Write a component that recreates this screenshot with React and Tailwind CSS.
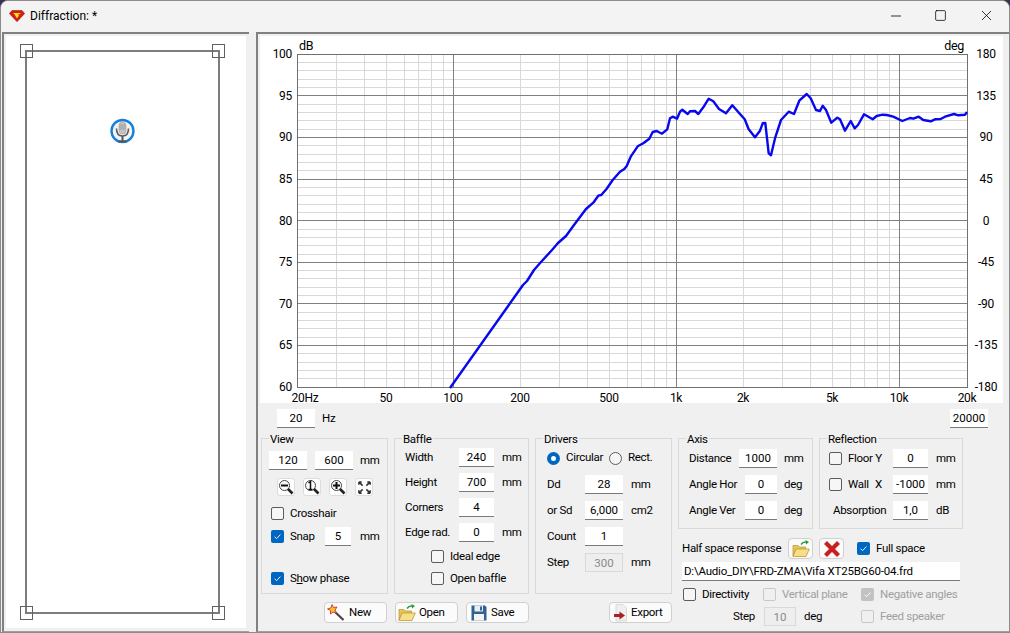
import { Minus, Square, X } from "lucide-react";

const CURVE = "450,388 523,285 527,281 534,270 541,262 552,250 558,243 566,236 574,225 586,209 593.3,202.7 598.3,195.7 601.3,195 606.7,188.7 612.7,180 620,171.7 624.3,169 626.7,166 630.7,156.7 637.7,146.3 643.3,143.3 649.3,138.7 652.7,132 656.7,131 662,133.7 667.3,129.3 670,118.3 672.7,116.7 677,118.7 680,111.7 682.3,109.7 687.7,114 690,111.3 695,111 698.3,114 703.3,107.3 708.7,98.7 713.3,101.3 719,109 726,113.3 732.3,105.3 740,114 744.7,119.3 748.7,129.3 755,137.3 760,130.7 762.7,123.3 765.3,123 768.7,153.3 771,155.3 775.3,137.3 781,120 788.7,111.7 794,114 799.3,100.7 806.7,94 810.7,98.3 816,110 820,111 822.7,105.7 826,110 831.3,122.7 837.3,117.7 840,119.3 845,130.7 850.7,121 854.7,128.3 858,125 864,114.3 872.7,119.3 876.7,116 882.7,114.7 886.7,115 893.3,116.7 902.3,121 910,118 913.3,118.7 918.7,116.7 923.3,120 930.7,121.3 935,119.3 940.7,119 945,116.7 954,114 958.3,115.3 965,114.7 967,112";

const FONT = "Roboto, sans-serif";
const TOP = 54;
const BOTTOM = 387;
const LEFT = 297;
const RIGHT = 967;

const freqX = (f) => Math.round(453 + 223 * Math.log10(f / 100)) + 0.5;
const dbY = (db) => Math.round(TOP - 0.3 + ((100 - db) * (BOTTOM - TOP)) / 40) + 0.5;

const minorFreqs = [];
[10, 100, 1000, 10000].forEach((d) => {
  [2, 3, 4, 5, 6, 7, 8, 9].forEach((m) => {
    if (d * m > 20 && d * m < 20000) minorFreqs.push(d * m);
  });
});
const dbs = Array.from({ length: 41 }, (_, i) => 60 + i);
const leftLabels = [100, 95, 90, 85, 80, 75, 70, 65, 60];
const rightLabels = [180, 135, 90, 45, 0, -45, -90, -135, -180];
const freqLabels = [
  ["20Hz", 305],
  ["50", 386],
  ["100", 453],
  ["200", 520],
  ["500", 609],
  ["1k", 676],
  ["2k", 743],
  ["5k", 832],
  ["10k", 899],
  ["20k", 967],
];

function Chart() {
  return (
    <svg viewBox="260 36 743 367" className="block w-[743px] h-[367px] ml-[2px] bg-white" style={{ fontFamily: FONT }}>
      <g shapeRendering="crispEdges" strokeWidth="1">
        {dbs.filter((d) => d % 5 !== 0).map((d) => (
          <line key={d} x1={LEFT} x2={RIGHT} y1={dbY(d)} y2={dbY(d)} stroke="#d9d9d9" />
        ))}
        {minorFreqs.map((f) => (
          <line key={f} x1={freqX(f)} x2={freqX(f)} y1={TOP} y2={BOTTOM} stroke="#d9d9d9" />
        ))}
        {dbs.filter((d) => d % 5 === 0).map((d) => (
          <line key={d} x1={LEFT} x2={RIGHT} y1={dbY(d)} y2={dbY(d)} stroke="#808080" />
        ))}
        {[100, 1000, 10000].map((f) => (
          <line key={f} x1={freqX(f)} x2={freqX(f)} y1={TOP} y2={BOTTOM} stroke="#808080" />
        ))}
        <rect x={LEFT + 0.5} y={TOP + 0.5} width={RIGHT - LEFT} height={BOTTOM - TOP} fill="none" stroke="#707070" />
      </g>
      <polyline points={CURVE} fill="none" stroke="#0808ee" strokeWidth="2.4" strokeLinejoin="round" />
      <text x="299" y="50" fontSize="12.5">dB</text>
      <text x="964" y="50" fontSize="12.5" textAnchor="end">deg</text>
      {leftLabels.map((v, i) => (
        <text key={v} x="292" y={TOP + (i * (BOTTOM - TOP)) / 8 + 4} fontSize="12" textAnchor="end">{v}</text>
      ))}
      {rightLabels.map((v, i) => (
        <text key={v} x="986" y={TOP + (i * (BOTTOM - TOP)) / 8 + 4} fontSize="12" textAnchor="middle">{v}</text>
      ))}
      {freqLabels.map(([t, x]) => (
        <text key={t} x={x} y="401.5" fontSize="12" textAnchor="middle">{t}</text>
      ))}
    </svg>
  );
}

function Handle({ x, y }) {
  return <rect x={x + 0.5} y={y + 0.5} width="12" height="13" fill="none" stroke="#606060" shapeRendering="crispEdges" />;
}

function BaffleView() {
  return (
    <svg viewBox="6 36 240 592" className="block w-[240px] h-[592px] bg-white">
      <rect x="26" y="51" width="193" height="562" fill="none" stroke="#7c7c7c" strokeWidth="2" shapeRendering="crispEdges" />
      <Handle x={20} y={44} />
      <Handle x={212} y={44} />
      <Handle x={20} y={606} />
      <Handle x={212} y={606} />
      <circle cx="122.5" cy="131" r="11" fill="#f4f4f4" stroke="#1680d8" strokeWidth="2.4" />
      <rect x="119" y="122" width="7" height="12" rx="3.5" fill="#c4c4c4" stroke="#9a9a9a" strokeWidth="0.6" />
      <path d="M119.5 125 h6 M119.5 127 h6 M119.5 129 h6" stroke="#8c8c8c" strokeWidth="0.7" />
      <path d="M116.5 128.5 q0 7.5 6 7.5 q6 0 6 -7.5" fill="none" stroke="#5c5c5c" strokeWidth="1.6" />
      <path d="M122.5 136 v5 M118.5 141.5 h8" stroke="#555" strokeWidth="2" />
    </svg>
  );
}

function Logo() {
  return (
    <svg viewBox="0 0 16 12" className="w-[16px] h-[12px]">
      <path d="M3 0.5 H13 L15.7 3.5 L8 11.7 L0.3 3.5 Z" fill="#d81a10" stroke="#8a1408" strokeWidth="0.5" />
      <path d="M4 3 H12 L10 4.4 H8.5 L10 5.5 L8 8.6 L5.6 4.6 Z" fill="#f6e21c" />
    </svg>
  );
}

function Num({ value, className, disabled }) {
  return (
    <input
      readOnly
      value={value}
      className={
        disabled
          ? `h-[19px] text-center tracking-normal text-[#8a8a8a] bg-[#eeeeee] border border-[#d9d9d9] outline-none ${className}`
          : `h-[19px] text-center tracking-normal text-black bg-white border-b border-[#7a7a7a] outline-none ${className}`
      }
    />
  );
}

function Check({ checked, disabled }) {
  if (checked) {
    return (
      <span className={`w-[13px] h-[13px] shrink-0 rounded-[2px] flex items-center justify-center ${disabled ? "bg-[#c2c2c2]" : "bg-[#0067c0]"}`}>
        <svg viewBox="0 0 10 10" className="w-[9px] h-[9px]">
          <path d="M1.8 5.2 L4 7.4 L8.2 2.8" fill="none" stroke="white" strokeWidth="1" />
        </svg>
      </span>
    );
  }
  return <span className={`w-[13px] h-[13px] shrink-0 rounded-[2px] border ${disabled ? "border-[#c8c8c8] bg-[#f0f0f0]" : "border-[#5c5c5c] bg-[#f6f6f6]"}`} />;
}

function CheckRow({ label, checked, disabled, className = "" }) {
  return (
    <div className={`h-[16px] flex items-center gap-[6px] ${disabled ? "text-[#a0a0a0]" : ""} ${className}`}>
      <Check checked={checked} disabled={disabled} />
      <span className="pt-px">{label}</span>
    </div>
  );
}

function Radio({ on }) {
  return on ? (
    <span className="w-[13px] h-[13px] shrink-0 rounded-full border-[4px] border-[#0067c0] bg-white" />
  ) : (
    <span className="w-[13px] h-[13px] shrink-0 rounded-full border border-[#5c5c5c] bg-[#f6f6f6]" />
  );
}

function Group({ title, className, children }) {
  return (
    <div className={`relative border border-[#d9d9d9] ${className}`}>
      <span className="absolute left-[7px] -top-[8px] leading-[16px] px-px bg-[#f0f0f0]">{title}</span>
      {children}
    </div>
  );
}

function ZoomIcon({ sign }) {
  return (
    <button className="w-[18px] h-[18px] rounded-[3px] bg-white border border-[#dcdcdc] flex items-center justify-center">
      <svg viewBox="0 0 16 16" className="w-[16px] h-[16px]">
        <circle cx="6.5" cy="6.5" r="5" fill="none" stroke="#444" strokeWidth="1" />
        {sign === "-" && <path d="M3 6.5 h7" stroke="#111" strokeWidth="2" />}
        {sign === "+" && <path d="M3 6.5 h7 M6.5 3 v7" stroke="#111" strokeWidth="2" />}
        {sign === "1" && <path d="M4.5 4 l2 -1.5 v8 M4.5 10.5 h4" fill="none" stroke="#111" strokeWidth="1.5" />}
        <path d="M10 10 L14.5 14.5" stroke="#222" strokeWidth="2.6" />
      </svg>
    </button>
  );
}

function FitIcon() {
  return (
    <button className="w-[18px] h-[18px] rounded-[3px] bg-white border border-[#dcdcdc] flex items-center justify-center">
      <svg viewBox="0 0 16 16" className="w-[15px] h-[15px]">
        <path d="M2 2 l4 4 M2 2 h3 M2 2 v3 M14 2 l-4 4 M14 2 h-3 M14 2 v3 M2 14 l4 -4 M2 14 h3 M2 14 v-3 M14 14 l-4 -4 M14 14 h-3 M14 14 v-3" fill="none" stroke="#333" strokeWidth="1.6" />
      </svg>
    </button>
  );
}

function WandIcon() {
  return (
    <svg viewBox="0 0 18 18" className="w-[18px] h-[18px]">
      <path d="M7 7 L16.5 16" stroke="#444" strokeWidth="2.2" />
      <path d="M5 0.5 L6.5 3.5 L10 3 L8 6 L9.5 9 L6 8 L3.5 10 L3.5 6.5 L0.5 5 L4 3.8 Z" fill="#f2c230" stroke="#d8403a" strokeWidth="1" />
    </svg>
  );
}

function FolderIcon() {
  return (
    <svg viewBox="0 0 18 18" className="w-[18px] h-[18px]">
      <path d="M1 5.5 h5 l1.5 1.5 h6 v2.5 H4 L1 16 Z" fill="#e9c558" stroke="#b5922e" strokeWidth="0.7" />
      <path d="M4 9 H17.3 L14 16.5 H1 Z" fill="#f7df86" stroke="#b5922e" strokeWidth="0.7" />
      <path d="M9 4.5 q2 -3 5.5 -2.5" fill="none" stroke="#2e9a3c" strokeWidth="1.4" />
      <path d="M13.5 0 l3.5 2 l-3 2.6 Z" fill="#2e9a3c" />
    </svg>
  );
}

function SaveIcon() {
  return (
    <svg viewBox="0 0 18 18" className="w-[18px] h-[18px]">
      <path d="M1.5 1.5 H15 L16.5 3 V16.5 H1.5 Z" fill="#2f6391" />
      <rect x="4.5" y="1.5" width="8.5" height="6" fill="#e9eef3" />
      <rect x="10" y="2.5" width="2" height="4" fill="#2f6391" />
      <rect x="4" y="10" width="10" height="6.5" fill="#f3f3f3" />
    </svg>
  );
}

function ExportIcon() {
  return (
    <svg viewBox="0 0 18 18" className="w-[18px] h-[18px]">
      <path d="M4 0.5 H11 L14.5 4 V17 H4 Z" fill="#efefef" stroke="#d0d0d0" strokeWidth="0.7" />
      <path d="M2 10 H7.5 V7.5 L13 11.5 L7.5 15.5 V13 H2 Z" fill="#a82020" />
    </svg>
  );
}

function ToolButton({ icon, label, className, iconClass, labelClass }) {
  return (
    <button className={`h-[21px] rounded-[4px] bg-[#fbfbfb] border border-[#d0d0d0] flex items-center ${className}`}>
      <span className={`w-[18px] h-[18px] ${iconClass}`}>{icon}</span>
      <span className={`pt-px ${labelClass}`}>{label}</span>
    </button>
  );
}

function SmallIconButton({ children, className = "" }) {
  return (
    <button className={`w-[25px] h-[21px] rounded-[4px] bg-[#fbfbfb] border border-[#d0d0d0] flex items-center justify-center ${className}`}>
      {children}
    </button>
  );
}

function LabelRow({ label, labelClass, value, inputClass, unit, unitClass, disabled }) {
  return (
    <div className="h-[19px] flex items-center">
      <span className={labelClass}>{label}</span>
      <Num value={value} className={inputClass} disabled={disabled} />
      <span className={unitClass}>{unit}</span>
    </div>
  );
}

function ViewGroup() {
  return (
    <Group title="View" className="w-[127px] pl-[7px] pt-[12px]">
      <div className="h-[19px] flex items-center">
        <Num value="120" className="w-[38px]" />
        <Num value="600" className="w-[38px] ml-[8px]" />
        <span className="ml-[7px]">mm</span>
      </div>
      <div className="mt-[8px] pl-[8px] flex gap-[8px]">
        <ZoomIcon sign="-" />
        <ZoomIcon sign="1" />
        <ZoomIcon sign="+" />
        <FitIcon />
      </div>
      <CheckRow label="Crosshair" className="mt-[9px] ml-[2px]" />
      <div className="mt-[6px] ml-[2px] h-[19px] flex items-center">
        <Check checked />
        <span className="ml-[6px] w-[35px]">Snap</span>
        <Num value="5" className="w-[26px]" />
        <span className="ml-[9px]">mm</span>
      </div>
      <CheckRow checked label={<><span>S</span><span className="underline">h</span><span>ow phase</span></>} className="mt-[24px] ml-[2px]" />
    </Group>
  );
}

function BaffleGroup() {
  const rows = [
    ["Width", "240", "mm"],
    ["Height", "700", "mm"],
    ["Corners", "4", ""],
    ["Edge rad.", "0", "mm"],
  ];
  return (
    <Group title="Baffle" className="w-[135px] pl-[10px] pt-[9px]">
      <div className="flex flex-col gap-[6px]">
        {rows.map(([l, v, u]) => (
          <LabelRow key={l} label={l} labelClass="w-[54px]" value={v} inputClass="w-[35px]" unit={u} unitClass="ml-[8px]" />
        ))}
      </div>
      <CheckRow label="Ideal edge" className="mt-[6px] ml-[26px]" />
      <CheckRow label="Open baffle" className="mt-[6px] ml-[26px]" />
    </Group>
  );
}

function DriversGroup() {
  return (
    <Group title="Drivers" className="w-[137px] pl-[11px] pt-[11px]">
      <div className="h-[16px] flex items-center">
        <Radio on />
        <span className="ml-[6px] w-[43px]">Circular</span>
        <Radio />
        <span className="ml-[6px]">Rect.</span>
      </div>
      <div className="mt-[9px] flex flex-col gap-[7px]">
        <LabelRow label="Dd" labelClass="w-[38px]" value="28" inputClass="w-[38px]" unit="mm" unitClass="ml-[8px]" />
        <LabelRow label="or Sd" labelClass="w-[38px]" value="6,000" inputClass="w-[38px]" unit="cm2" unitClass="ml-[8px]" />
        <LabelRow label="Count" labelClass="w-[38px]" value="1" inputClass="w-[38px]" unit="" unitClass="ml-[8px]" />
        <LabelRow label="Step" labelClass="w-[38px]" value="300" inputClass="w-[38px]" unit="mm" unitClass="ml-[8px]" disabled />
      </div>
    </Group>
  );
}

function AxisGroup() {
  return (
    <Group title="Axis" className="w-[135px] pl-[10px] pt-[10px]">
      <div className="flex flex-col gap-[7px]">
        <LabelRow label="Distance" labelClass="w-[50px]" value="1000" inputClass="w-[38px]" unit="mm" unitClass="ml-[7px]" />
        <LabelRow label="Angle Hor" labelClass="w-[56px]" value="0" inputClass="w-[32px]" unit="deg" unitClass="ml-[7px]" />
        <LabelRow label="Angle Ver" labelClass="w-[56px]" value="0" inputClass="w-[32px]" unit="deg" unitClass="ml-[7px]" />
      </div>
    </Group>
  );
}

function ReflectionGroup() {
  return (
    <Group title="Reflection" className="w-[144px] pl-[9px] pt-[10px]">
      <div className="flex flex-col gap-[7px]">
        <div className="h-[19px] flex items-center">
          <Check />
          <span className="ml-[6px] w-[45px]">Floor Y</span>
          <Num value="0" className="w-[35px]" />
          <span className="ml-[8px]">mm</span>
        </div>
        <div className="h-[19px] flex items-center">
          <Check />
          <span className="ml-[6px] w-[27px]">Wall</span>
          <span className="w-[18px]">X</span>
          <Num value="-1000" className="w-[35px]" />
          <span className="ml-[8px]">mm</span>
        </div>
        <LabelRow label="Absorption" labelClass="ml-[4px] w-[60px]" value="1,0" inputClass="w-[35px]" unit="dB" unitClass="ml-[8px]" />
      </div>
    </Group>
  );
}

function HalfSpace() {
  return (
    <div>
      <div className="mt-[9px] h-[21px] flex items-center">
        <span className="ml-[4px] w-[106px] pt-px">Half space response</span>
        <SmallIconButton><FolderIcon /></SmallIconButton>
        <SmallIconButton className="ml-[6px]">
          <svg viewBox="0 0 18 18" className="w-[18px] h-[18px]">
            <path d="M2.5 2.5 L15.5 15.5 M15.5 2.5 L2.5 15.5" stroke="#c8201c" strokeWidth="4.2" />
          </svg>
        </SmallIconButton>
        <CheckRow checked label="Full space" className="ml-[13px]" />
      </div>
      <input
        readOnly
        value="D:\Audio_DIY\FRD-ZMA\Vifa XT25BG60-04.frd"
        className="block mt-[3px] ml-[4px] w-[278px] h-[19px] px-[2px] bg-white border-b border-[#7a7a7a] tracking-[-0.2px] text-black outline-none"
      />
      <div className="mt-[5px] ml-[5px] flex">
        <CheckRow label="Directivity" className="w-[80px]" />
        <CheckRow disabled label="Vertical plane" className="w-[98px]" />
        <CheckRow disabled checked label="Negative angles" />
      </div>
      <div className="mt-[5px] h-[19px] flex items-center">
        <span className="ml-[55px] w-[31px]">Step</span>
        <Num disabled value="10" className="w-[32px]" />
        <span className="ml-[8px] w-[57px]">deg</span>
        <CheckRow disabled label="Feed speaker" />
      </div>
    </div>
  );
}

export default function App() {
  return (
    <div className="w-[1010px] h-[633px] bg-[#3b3352] overflow-hidden text-[11.5px] tracking-[-0.3px] whitespace-nowrap text-black" style={{ fontFamily: FONT }}>
      <div className="w-full h-full rounded-t-[8px] border border-[#8c8c8c] bg-[#f0f0f0] overflow-hidden">
        <div className="h-[31px] pb-[2px] bg-[#f3f3f3] flex items-center">
          <span className="ml-[8px]"><Logo /></span>
          <span className="ml-[5px] text-[12px] tracking-normal">Diffraction: *</span>
          <div className="ml-auto flex items-center">
            <span className="w-[45px] flex justify-center"><Minus size={16} strokeWidth={1.2} /></span>
            <span className="w-[45px] flex justify-center"><Square size={13} strokeWidth={1.4} /></span>
            <span className="w-[46px] flex justify-center"><X size={17} strokeWidth={1.1} /></span>
          </div>
        </div>
        <div className="flex h-[600px]">
          <div className="ml-[1px] w-[247px] border-t-2 border-l-2 border-b border-t-[#808080] border-l-[#808080] border-b-[#a0a0a0] pt-[2px] pl-[2px]">
            <BaffleView />
          </div>
          <div className="ml-[7px] flex-1 border-t-2 border-l-2 border-b border-t-[#808080] border-l-[#808080] border-b-[#a0a0a0] pt-[2px]">
            <Chart />
            <div className="mt-[6px] pl-[19px] pr-[21px] h-[19px] flex items-center">
              <Num value="20" className="w-[38px]" />
              <span className="ml-[7px]">Hz</span>
              <Num value="20000" className="ml-auto w-[38px]" />
            </div>
            <div className="mt-[10px] pl-[3px] flex gap-[6px]">
              <div className="w-[411px]">
                <div className="h-[156px] flex gap-[6px]">
                  <ViewGroup />
                  <BaffleGroup />
                  <DriversGroup />
                </div>
                <div className="mt-[8px] flex">
                  <ToolButton icon={<WandIcon />} label="New" className="ml-[63px] w-[63px]" iconClass="ml-[2px]" labelClass="ml-[4px]" />
                  <ToolButton icon={<FolderIcon />} label="Open" className="ml-[8px] w-[63px]" iconClass="ml-[2px]" labelClass="ml-[3px]" />
                  <ToolButton icon={<SaveIcon />} label="Save" className="ml-[8px] w-[63px]" iconClass="ml-[3px]" labelClass="ml-[3px]" />
                  <ToolButton icon={<ExportIcon />} label="Export" className="ml-[80px] w-[63px]" iconClass="ml-[2px]" labelClass="ml-[1px]" />
                </div>
              </div>
              <div>
                <div className="h-[91px] flex gap-[6px]">
                  <AxisGroup />
                  <ReflectionGroup />
                </div>
                <HalfSpace />
              </div>
            </div>
          </div>
        </div>
      </div>
    </div>
  );
}
